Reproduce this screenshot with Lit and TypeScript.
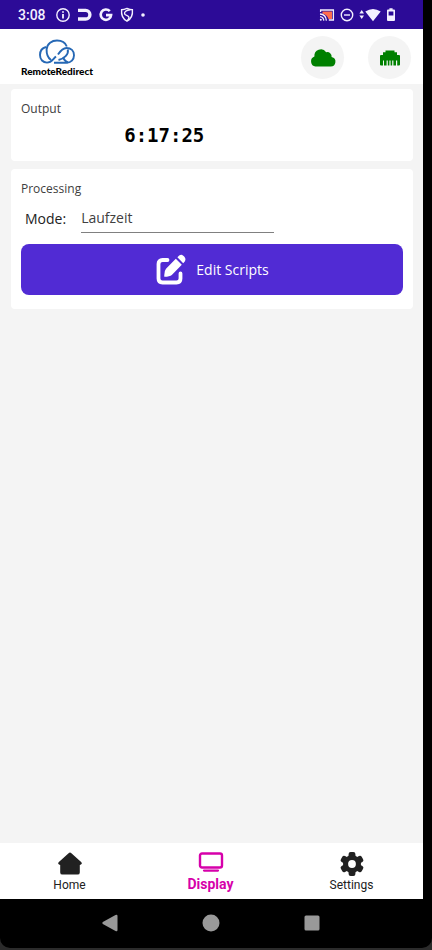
import { LitElement, html, css, svg } from "lit";
import { customElement, state } from "lit/decorators.js";
import { classMap } from "lit/directives/class-map.js";

const homeIcon = svg`<svg class="tab-icon" viewBox="0 0 26 24" aria-hidden="true">
  <path fill="currentColor" d="M11.6 1.2Q13 0 14.4 1.2L24.4 10.2Q25.6 11.6 24 12.6L22.8 13V20.4Q22.8 22.6 20.6 22.6H5.4Q3.2 22.6 3.2 20.4V13L2 12.6Q.4 11.6 1.6 10.2Z"/></svg>`;

const displayIcon = svg`<svg class="tab-icon" viewBox="0 0 26 24" aria-hidden="true">
  <rect x="2" y="1.5" width="22" height="14" rx="2" fill="none" stroke="currentColor" stroke-width="2.4"/>
  <path stroke="currentColor" stroke-width="2.2" stroke-linecap="round" d="M6 18.6H20"/></svg>`;

const settingsIcon = svg`<svg class="tab-icon" viewBox="0 0 26 24" aria-hidden="true">
  <g fill="currentColor">
    <rect x="9.6" y="0" width="6.8" height="24" rx="2"/>
    <rect x="9.6" y="0" width="6.8" height="24" rx="2" transform="rotate(60 13 12)"/>
    <rect x="9.6" y="0" width="6.8" height="24" rx="2" transform="rotate(120 13 12)"/>
    <circle cx="13" cy="12" r="9"/>
  </g>
  <circle cx="13" cy="12" r="3.9" fill="#fff"/></svg>`;

const TABS = [
  { id: "home", label: "Home", icon: homeIcon },
  { id: "display", label: "Display", icon: displayIcon },
  { id: "settings", label: "Settings", icon: settingsIcon },
];

@customElement("status-bar")
export class StatusBar extends LitElement {
  static styles = css`
    :host {
      display: flex;
      align-items: center;
      justify-content: space-between;
      height: 29px;
      padding: 0 27px 0 18px;
      background: #2c0b97;
      color: #f4f0ff;
      font: 500 14px/16px Roboto, sans-serif;
    }
    .group {
      display: flex;
      align-items: center;
    }
    .left { gap: 6px; }
    .right { gap: 5px; }
    .time { margin-right: 3px; }
    svg { display: block; }
  `;

  render() {
    return html`
      <div class="group left">
        <span class="time">3:08</span>
        <svg width="16" height="16" viewBox="0 0 16 16" fill="none" stroke="currentColor">
          <circle cx="8" cy="8" r="6.2" stroke-width="1.4"/>
          <path stroke-width="1.8" d="M8 7V11.6M8 4.2V5.8"/>
        </svg>
        <svg width="15" height="16" viewBox="0 0 15 16" fill="none" stroke="currentColor">
          <path stroke-width="3.4" d="M1 3.4H8.6A4.300 4.300 0 0 1 8.6 12H1"/>
        </svg>
        <svg width="15" height="16" viewBox="0 0 15 16" fill="none" stroke="currentColor">
          <path stroke-width="2.6" d="M11.8 4.2A5.2 5.2 0 1 0 13.1 8.1H8"/>
        </svg>
        <svg width="16" height="16" viewBox="0 0 16 16" fill="none" stroke="currentColor" stroke-width="1.4">
          <path d="M8 1.4Q11 2.800 13.400 2.800Q14.200 11 8 14.200Q1.800 11 2.600 2.800Q5 2.800 8 1.400Z"/>
          <path d="M11.400 2.800C7 3.200 5.200 5 5.600 6.800C6 8.600 10 8.200 10 10.600Q9.800 12.200 8.400 13.600"/>
        </svg>
        <svg width="4" height="4" viewBox="0 0 4 4"><circle cx="2" cy="2" r="1.8" fill="currentColor"/></svg>
      </div>
      <div class="group right">
        <svg width="16" height="14" viewBox="0 0 16 14" fill="none" stroke="currentColor" stroke-width="1.3">
          <path fill="#ff6d4d" stroke="none" d="M3.500 3.500H13V11H9.500Q8 6.500 3.500 5.500Z"/>
          <path d="M1.600 4V2H14.400V12H9.800M1 6Q7 6.400 7.400 12.600M1 8.600Q4.400 9 4.800 12.600"/>
          <circle cx="1.800" cy="11.800" r="1" fill="currentColor" stroke="none"/>
        </svg>
        <svg width="14" height="14" viewBox="0 0 14 14" fill="none" stroke="currentColor" stroke-width="1.400">
          <circle cx="7" cy="7" r="5.700"/><path d="M4 7H10"/>
        </svg>
        <svg width="22" height="14" viewBox="0 0 22 14" fill="currentColor">
          <path d="M.400 5.600L2.700 2L5 5.600ZM.400 7.400H5L2.700 11ZM6.300 3.600Q14 -1.800 21.700 3.600L14 13.200Z"/>
        </svg>
        <svg width="10" height="14" viewBox="0 0 10 14">
          <path fill="currentColor" d="M3.400 .200H6.600V1.500H8Q9 1.500 9 2.500V12Q9 13 8 13H2Q1 13 1 12V2.500Q1 1.500 2 1.500H3.400Z"/>
          <path fill="#2c0b97" d="M2.600 3.500H7.400V7.500H2.600Z"/>
        </svg>
      </div>
    `;
  }
}

@customElement("app-header")
export class AppHeader extends LitElement {
  static styles = css`
    :host {
      display: flex;
      align-items: center;
      justify-content: space-between;
      box-sizing: border-box;
      height: 55px;
      padding: 2px 12px 0 21px;
      background: #fff;
    }
    .brand {
      display: flex;
      flex-direction: column;
      align-items: center;
      color: #000;
      font: 900 10px/12px Lato, sans-serif;
    }
    .brand svg { display: block; }
    .actions {
      display: flex;
      gap: 24px;
    }
    button {
      display: grid;
      place-items: center;
      width: 43px;
      height: 43px;
      padding: 0;
      border: 0;
      border-radius: 50%;
      background: #f4f4f4;
      color: #008000;
    }
  `;

  render() {
    return html`
      <div class="brand">
        <svg width="38" height="26" viewBox="0 0 38 26" fill="none" stroke="#2668b5" stroke-width="1.9" aria-hidden="true">
          <path d="M8 8C4 9 2 12.500 2 16C2 20.500 5 23.600 9 23.600C13.500 23.600 14.500 20.500 18 17.500"/>
          <path d="M13 21C9.500 18.500 8.500 14 8.600 10.500C9 4.500 14 1.500 19 1.500C24 1.500 27.500 4 28.800 7.500"/>
          <path d="M20 15.500C23 11 25 9 28.500 9C33 9 36 12 36 16.300C36 20.500 33 23.700 28.500 23.700H16"/>
          <path d="M29.800 10.500C31 15.500 26 19.500 20.500 21"/>
          <path d="M25 18.500Q27 22.500 30 23.500"/>
        </svg>
        <span>RemoteRedirect</span>
      </div>
      <div class="actions">
        <button type="button" aria-label="Cloud connection">
          <svg width="26" height="20" viewBox="0 0 26 20" aria-hidden="true">
            <path fill="currentColor" d="M5.500 18.500A5.200 5.200 0 0 1 4.400 8.500A6.500 6.500 0 0 1 16.200 4.200A4.300 4.300 0 0 1 21.600 9A4.800 4.800 0 0 1 20.500 18.500Z"/>
          </svg>
        </button>
        <button type="button" aria-label="Ethernet connection">
          <svg width="22" height="18" viewBox="0 0 22 18" aria-hidden="true">
            <path fill="currentColor" d="M6.500 1.500H15.500V3.200H18V6H20Q21 6 21 7V15.500Q21 16.500 20 16.500H18.200V11.500H17V16.500H14.400V11.500H13.200V16.500H11.600V11.500H10.400V16.500H8.800V11.500H7.600V16.500H5V11.500H4V16.500H2Q1 16.500 1 15.500V7Q1 6 2 6H4V3.200H6.500Z"/>
          </svg>
        </button>
      </div>
    `;
  }
}

@customElement("app-root")
export class AppRoot extends LitElement {
  static styles = css`
    :host {
      display: flex;
      flex-direction: column;
      box-sizing: border-box;
      min-height: 100vh;
      padding-bottom: 2px;
      background: #2b2b2b;
      font-family: "Open Sans", sans-serif;
    }
    .device {
      flex: 1;
      display: flex;
      flex-direction: column;
      padding-right: 9px;
      background: #000;
      border-radius: 0 0 10px 10px;
    }
    main {
      flex: 1;
      display: flex;
      flex-direction: column;
      gap: 8px;
      padding: 5px 10px 16px 11px;
      background: #f4f4f4;
    }
    section {
      padding: 10px 10px 14px;
      border-radius: 4px;
      background: #fff;
    }
    h2 {
      margin: 0;
      color: #404040;
      font-size: 12px;
      font-weight: 400;
      line-height: 19px;
    }
    .output {
      display: grid;
      grid-template-columns: 3fr 1fr;
      margin-top: 5px;
      color: #000;
      font: 700 19px/24px "DejaVu Sans Mono", monospace;
      text-align: center;
    }
    .mode {
      display: flex;
      align-items: center;
      gap: 15px;
      margin: 6px 0 11px 4px;
      font-size: 14px;
      color: #222;
    }
    select {
      appearance: none;
      width: 51%;
      height: 29px;
      padding: 0 0 2px;
      border: 0;
      border-bottom: 1px solid #808080;
      border-radius: 0;
      background: none;
      color: #404040;
      font: inherit;
    }
    .edit {
      display: flex;
      align-items: center;
      justify-content: center;
      gap: 10px;
      width: 100%;
      height: 51px;
      padding: 0;
      border: 0;
      border-radius: 8px;
      background: #512bd4;
      color: #fff;
      font: 14px/20px "Open Sans", sans-serif;
    }
    .tabs {
      display: grid;
      grid-template-columns: repeat(3, 1fr);
      height: 56px;
      background: #fff;
    }
    .tab {
      display: flex;
      flex-direction: column;
      align-items: center;
      gap: 1px;
      padding: 9px 2px 0 0;
      border: 0;
      background: none;
      color: #212121;
      font: 400 12px/16px Roboto, sans-serif;
    }
    .tab.active {
      gap: 0;
      color: #d600aa;
      font-size: 14px;
      font-weight: 700;
    }
    .tab-icon {
      width: 26px;
      height: 24px;
    }
    .system {
      display: flex;
      align-items: center;
      justify-content: center;
      gap: 83px;
      box-sizing: border-box;
      height: 49px;
      padding: 0 1px 2px 0;
    }
    .system button {
      padding: 0;
      border: 0;
      background: none;
    }
    .system svg { display: block; }
  `;

  @state() private tab = "display";

  render() {
    return html`
      <div class="device">
        <status-bar></status-bar>
        <app-header></app-header>
        <main>
          <section>
            <h2>Output</h2>
            <div class="output"><output>6:17:25</output></div>
          </section>
          <section>
            <h2>Processing</h2>
            <div class="mode">
              <label for="mode">Mode:</label>
              <select id="mode"><option>Laufzeit</option></select>
            </div>
            <button class="edit" type="button">
              <svg width="31" height="31" viewBox="0 0 31 31" aria-hidden="true">
                <path fill="none" stroke="#fff" stroke-width="3.800" stroke-linecap="round" d="M12.500 6H7.500Q3.500 6 3.500 10V24.500Q3.500 28.500 7.500 28.500H21.500Q25.500 28.500 25.500 24.500V19.500"/>
                <path fill="#fff" d="M20.800 4.800L26.800 10.800L16.800 21Q14.800 22.800 9.300 22.800Q9 17 11 14.800ZM22.400 3.200L24.200 1.600Q26.600 -.200 29.200 2.400Q31.400 5 29.800 7.400L28.200 9.200Z"/>
              </svg>
              <span>Edit Scripts</span>
            </button>
          </section>
        </main>
        <nav class="tabs">
          ${TABS.map(
            (t) => html`<button
              type="button"
              class=${classMap({ tab: true, active: t.id === this.tab })}
              @click=${() => (this.tab = t.id)}
            >${t.icon}<span>${t.label}</span></button>`
          )}
        </nav>
        <div class="system">
          <button type="button" aria-label="Back">
            <svg width="18" height="18" viewBox="0 0 18 18"><path fill="#999" d="M1.800 9.900Q.700 9 1.800 8.100L14.500 1Q16.500 .200 16.500 2V16Q16.500 17.800 14.500 17Z"/></svg>
          </button>
          <button type="button" aria-label="Home">
            <svg width="18" height="18" viewBox="0 0 18 18"><circle cx="9" cy="9" r="8.500" fill="#999"/></svg>
          </button>
          <button type="button" aria-label="Recent apps">
            <svg width="18" height="18" viewBox="0 0 18 18"><rect x="1.500" y="1.500" width="15" height="15" rx="1.500" fill="#999"/></svg>
          </button>
        </div>
      </div>
    `;
  }
}
